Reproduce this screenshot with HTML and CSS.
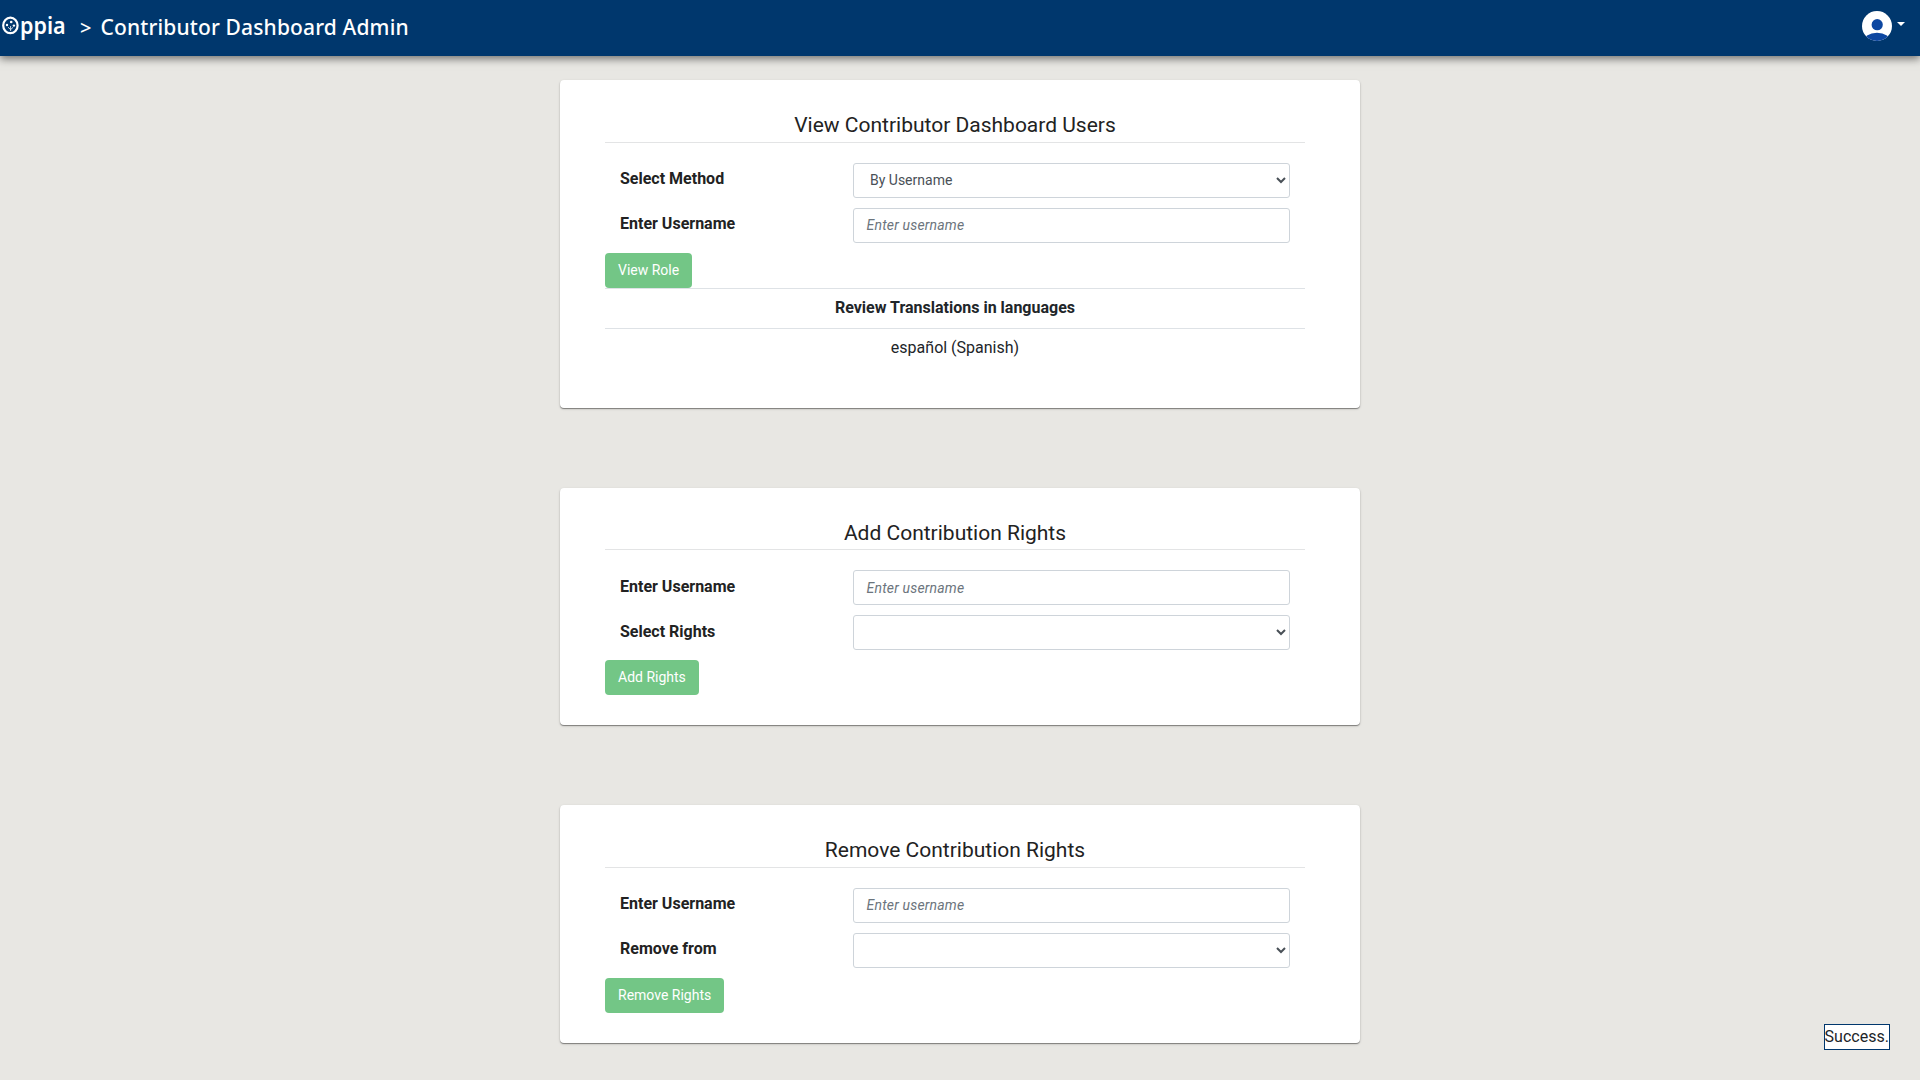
FILE: index.html
```html
<!DOCTYPE html>
<html lang="en">
<head>
<meta charset="utf-8">
<title>Contributor Dashboard Admin</title>
<link rel="stylesheet" href="styles.css">
</head>
<body>
<header class="navbar">
  <svg class="logo" width="66" height="56" viewBox="0 0 66 56">
    <ellipse cx="10.4" cy="25.4" rx="7.2" ry="7.8" fill="none" stroke="#fff" stroke-width="2.2"/>
    <path d="M10.6 31v-5M10.4 29.4l-2.4-2.2M10.8 29.4l2.4-2.2" fill="none" stroke="#fff" stroke-width=".8"/>
    <g fill="#fff"><circle cx="11.2" cy="22" r="1.3"/><circle cx="7" cy="25" r="1.2"/><circle cx="13.9" cy="25.6" r="1.2"/></g>
    <text class="logo-text" x="20" y="34" textLength="45.6" lengthAdjust="spacingAndGlyphs">ppia</text>
  </svg>
  <span class="separator">&gt;</span>
  <span class="page-name">Contributor Dashboard Admin</span>
  <div class="profile">
    <svg width="30" height="30" viewBox="0 0 30 30">
      <clipPath id="disc"><circle cx="15" cy="15" r="15"/></clipPath>
      <g clip-path="url(#disc)">
        <rect width="30" height="30" fill="#fff"/>
        <circle cx="15.2" cy="13.7" r="5.6" fill="#0d47a1"/>
        <ellipse cx="15" cy="31" rx="14" ry="9.3" fill="#0d47a1"/>
      </g>
    </svg>
    <span class="caret"></span>
  </div>
</header>
<main class="content">
  <section class="card">
    <h1 class="card-title">View Contributor Dashboard Users</h1>
    <form class="form">
      <div class="row"><label class="label">Select Method</label><select class="control"><option>By Username</option></select></div>
      <div class="row"><label class="label">Enter Username</label><input class="control" placeholder="Enter username"></div>
      <button class="button" type="button">View Role</button>
    </form>
    <table class="languages">
      <tr><th>Review Translations in languages</th></tr>
      <tr><td>español (Spanish)</td></tr>
    </table>
  </section>
  <section class="card">
    <h1 class="card-title">Add Contribution Rights</h1>
    <form class="form">
      <div class="row"><label class="label">Enter Username</label><input class="control" placeholder="Enter username"></div>
      <div class="row"><label class="label">Select Rights</label><select class="control"></select></div>
      <button class="button" type="button">Add Rights</button>
    </form>
  </section>
  <section class="card">
    <h1 class="card-title">Remove Contribution Rights</h1>
    <form class="form">
      <div class="row"><label class="label">Enter Username</label><input class="control" placeholder="Enter username"></div>
      <div class="row"><label class="label">Remove from</label><select class="control"></select></div>
      <button class="button" type="button">Remove Rights</button>
    </form>
  </section>
</main>
<div class="status">Success.</div>
</body>
</html>
```
FILE: styles.css
```css
* { box-sizing: border-box; }

body {
  margin: 0;
  height: 1080px;
  overflow: hidden;
  background: #e8e7e3;
  color: #212529;
  font: 16px/24px Roboto, sans-serif;
}

.navbar {
  display: flex;
  height: 56px;
  background: #00376d;
  color: #fff;
  font-family: "Noto Sans", sans-serif;
  box-shadow: 0 3px 8px rgba(0, 0, 0, .5);
}

.logo { display: block; overflow: visible; }
.logo-text { fill: #fff; font: 600 23px "Noto Sans", sans-serif; }

.separator {
  width: 34.6px;
  padding-left: 14px;
  font-size: 20px;
  font-weight: 500;
  line-height: 56px;
}

.page-name {
  font-size: 21px;
  font-weight: 500;
  line-height: 54px;
  letter-spacing: .14px;
}

.profile {
  display: flex;
  gap: 5px;
  margin: 11px 15px 0 auto;
}

.caret {
  height: 4px;
  margin-top: 11px;
  border: 4px solid transparent;
  border-top-color: #fff;
  border-bottom: 0;
}

.content {
  display: flex;
  flex-direction: column;
  gap: 80px;
  width: 800px;
  margin: 24px auto 0;
}

.card {
  height: 237.6px;
  padding: 30px 55px 0 45px;
  background: #fff;
  border-radius: 4px;
  box-shadow: 0 1px 1px rgba(0, 0, 0, .4), 0 1px 3px rgba(0, 0, 0, .14);
}
.card:first-child { height: 327.6px; }

.card-title {
  height: 32.7px;
  margin: 0 0 20px;
  border-bottom: 1px solid #e3e4e5;
  color: #222;
  font-size: 21px;
  font-weight: 400;
  line-height: 31px;
  text-align: center;
}

.form { display: flex; flex-direction: column; align-items: flex-start; gap: 10px; }

.row {
  display: grid;
  grid-template-columns: 233px 437px;
  height: 35px;
  padding-left: 15px;
}

.label { padding-top: .4px; color: #222; font-weight: 700; line-height: 31px; }

.control {
  width: 437px;
  height: 35px;
  padding: 6px 12px;
  border: 1px solid #ced4da;
  border-radius: 3px;
  background: #fff;
  color: #495057;
  font: 14px/21px Roboto, sans-serif;
}
.control::placeholder {
  color: #6c757d;
  font-style: italic;
  letter-spacing: .18px;
  text-indent: .6px;
}

.button {
  height: 35px;
  padding: 0 13px;
  border: 0;
  border-radius: 4px;
  background: #73c686;
  color: #fff;
  font: 14px/21px Roboto, sans-serif;
}

.languages { width: 100%; border-collapse: collapse; text-align: center; }
.languages th, .languages td { height: 40px; padding: 7px 12px; border-top: 1px solid #dee2e6; }

.status {
  position: absolute;
  right: 30.4px;
  bottom: 30px;
  width: 66px;
  height: 26px;
  border: 1px solid #00376d;
  background: #fff;
}
```
